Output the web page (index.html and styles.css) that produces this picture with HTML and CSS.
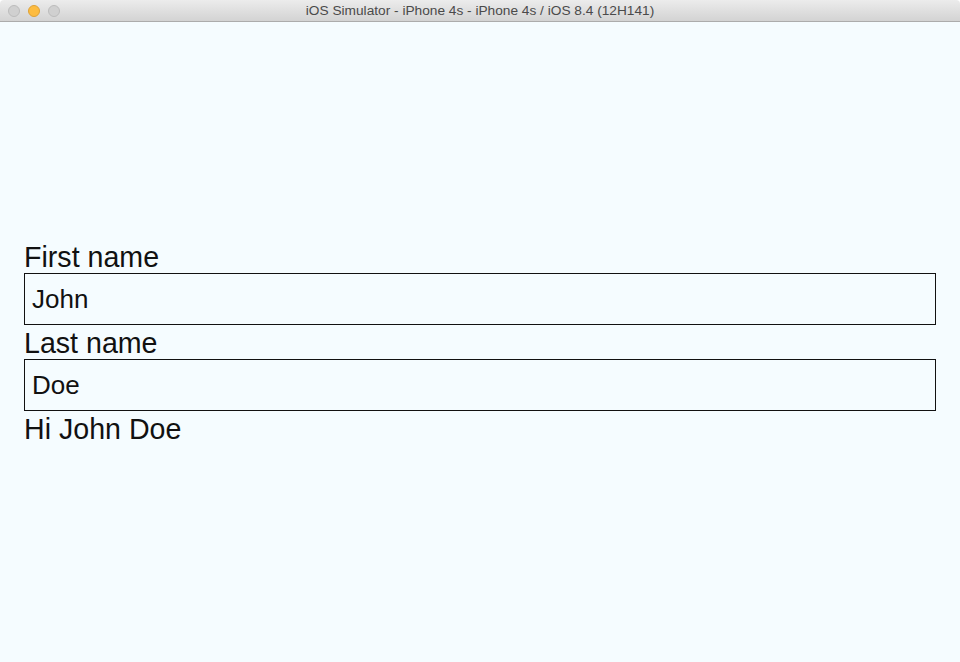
FILE: index.html
```html
<!DOCTYPE html>
<html>
<head>
<meta charset="utf-8">
<link rel="stylesheet" href="styles.css">
</head>
<body>
<div class="window">
  <div class="titlebar">
    <div class="lights">
      <span class="light grey"></span>
      <span class="light orange"></span>
      <span class="light grey"></span>
    </div>
    <div class="title">iOS Simulator - iPhone 4s - iPhone 4s / iOS 8.4 (12H141)</div>
  </div>
  <div class="screen">
    <div class="form">
      <div class="label">First name</div>
      <input class="field" type="text" value="John">
      <div class="label">Last name</div>
      <input class="field" type="text" value="Doe">
      <div class="label greet">Hi John Doe</div>
    </div>
  </div>
</div>
</body>
</html>
```
FILE: styles.css
```css
html, body {
  margin: 0;
  padding: 0;
  height: 100%;
  background: #ffffff;
}
.window {
  width: 960px;
  height: 662px;
  display: flex;
  flex-direction: column;
  overflow: hidden;
  border-radius: 4px 4px 0 0;
  font-family: "Liberation Sans", Arial, sans-serif;
}
.titlebar {
  height: 21px;
  flex: none;
  position: relative;
  display: flex;
  align-items: center;
  justify-content: center;
  background: linear-gradient(#ececec, #d3d3d3);
  border-bottom: 1px solid #acacac;
}
.lights {
  position: absolute;
  left: 8px;
  top: 5px;
  display: flex;
  gap: 8px;
}
.light {
  width: 12px;
  height: 12px;
  border-radius: 50%;
  box-sizing: border-box;
}
.light.grey {
  background: #d0d0d0;
  border: 1px solid #bcbcbc;
}
.light.orange {
  background: #fdbc40;
  border: 1px solid #dea236;
}
.title {
  font-size: 13.7px;
  color: #4a4a4a;
  line-height: 21px;
}
.screen {
  flex: 1;
  background: #f5fcff;
  display: flex;
  flex-direction: column;
  justify-content: center;
  padding: 0 24px;
}
.form {
  display: flex;
  flex-direction: column;
}
.label {
  font-size: 28.6px;
  line-height: 32px;
  padding-top: 2px;
  color: #111;
}
.field {
  box-sizing: border-box;
  height: 52px;
  width: 912px;
  margin: 0;
  border: 1px solid #111;
  background: transparent;
  padding: 0 7px;
  font-family: "Liberation Sans", Arial, sans-serif;
  font-size: 26px;
  color: #111;
  outline: none;
}
```
